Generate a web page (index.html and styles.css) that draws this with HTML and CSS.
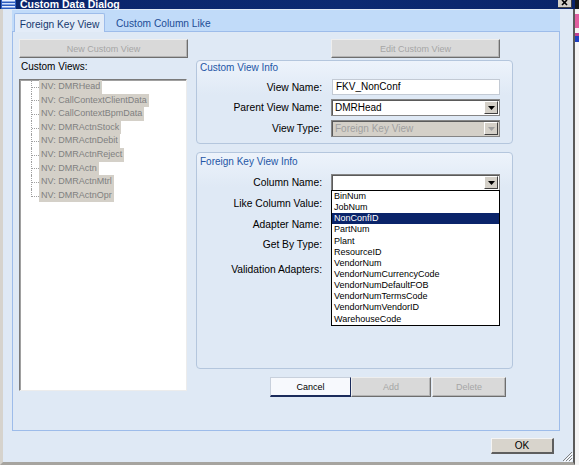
FILE: index.html
```html
<!DOCTYPE html>
<html>
<head>
<meta charset="utf-8">
<link rel="stylesheet" href="styles.css">
</head>
<body>
<div class="screen">
  <div class="window">
    <div class="titlebar">
      <svg class="app-icon" width="17" height="9" viewBox="0 0 17 9">
        <rect x="1" y="-2" width="15" height="11" fill="#2c5cc0"/>
        <rect x="2" y="0" width="13" height="1.5" fill="#e8f0ff"/>
        <rect x="2" y="3" width="13" height="1.5" fill="#cfe0ff"/>
        <rect x="2" y="6" width="13" height="1.5" fill="#e8f0ff"/>
      </svg>
      <span class="title">Custom Data Dialog</span>
      <span class="close">
        <svg width="13" height="7" viewBox="0 0 13 7"><path d="M4 0 L9 5 M9 0 L4 5" stroke="#000" stroke-width="1.6"/></svg>
      </span>
    </div>
    <div class="client">
      <div class="tabstrip">
        <div class="tab active">Foreign Key View</div>
        <div class="tab">Custom Column Like</div>
      </div>
      <div class="panel">
        <div class="col-left">
          <button class="btn btn-off btn-wide">New Custom View</button>
          <div class="lbl-views">Custom Views:</div>
          <div class="tree">
            <ul class="tree-list">
              <li><span class="item">NV: DMRHead</span></li>
              <li><span class="item">NV: CallContextClientData</span></li>
              <li><span class="item">NV: CallContextBpmData</span></li>
              <li><span class="item">NV: DMRActnStock</span></li>
              <li><span class="item">NV: DMRActnDebit</span></li>
              <li><span class="item">NV: DMRActnReject</span></li>
              <li><span class="item">NV: DMRActn</span></li>
              <li><span class="item">NV: DMRActnMtrl</span></li>
              <li><span class="item">NV: DMRActnOpr</span></li>
            </ul>
          </div>
        </div>
        <div class="col-right">
          <div class="top-row">
            <button class="btn btn-off btn-wide btn-edit">Edit Custom View</button>
          </div>
          <div class="group group-info">
            <div class="group-title">Custom View Info</div>
            <div class="form-row r16">
              <div class="label">View Name:</div>
              <div class="input">FKV_NonConf</div>
            </div>
            <div class="form-row r17">
              <div class="label">Parent View Name:</div>
              <div class="combo">
                <span class="val">DMRHead</span>
                <span class="arrow"><svg width="7" height="4" viewBox="0 0 7 4"><path d="M0 0 H7 L3.5 4 Z" fill="#000"/></svg></span>
              </div>
            </div>
            <div class="form-row r17">
              <div class="label">View Type:</div>
              <div class="combo combo-off">
                <span class="val">Foreign Key View</span>
                <span class="arrow"><svg width="7" height="4" viewBox="0 0 7 4"><path d="M0 0 H7 L3.5 4 Z" fill="#a0a0a0"/></svg></span>
              </div>
            </div>
          </div>
          <div class="group group-fk">
            <div class="group-title">Foreign Key View Info</div>
            <div class="fk-rows">
              <div class="form-row r17">
                <div class="label">Column Name:</div>
                <div class="combo-wrap">
                  <div class="combo">
                    <span class="val"></span>
                    <span class="arrow"><svg width="7" height="4" viewBox="0 0 7 4"><path d="M0 0 H7 L3.5 4 Z" fill="#000"/></svg></span>
                  </div>
                  <div class="dropdown">
                    <div class="opt">BinNum</div>
                    <div class="opt">JobNum</div>
                    <div class="opt sel">NonConfID</div>
                    <div class="opt">PartNum</div>
                    <div class="opt">Plant</div>
                    <div class="opt">ResourceID</div>
                    <div class="opt">VendorNum</div>
                    <div class="opt">VendorNumCurrencyCode</div>
                    <div class="opt">VendorNumDefaultFOB</div>
                    <div class="opt">VendorNumTermsCode</div>
                    <div class="opt">VendorNumVendorID</div>
                    <div class="opt">WarehouseCode</div>
                  </div>
                </div>
              </div>
              <div class="form-row r17"><div class="label">Like Column Value:</div></div>
              <div class="form-row r17 plus1"><div class="label">Adapter Name:</div></div>
              <div class="form-row r17"><div class="label">Get By Type:</div></div>
              <div class="form-row r17 plus4"><div class="label">Validation Adapters:</div></div>
            </div>
          </div>
          <div class="action-row">
            <button class="btn btn-cancel">Cancel</button>
            <button class="btn btn-off btn-add">Add</button>
            <button class="btn btn-off btn-delete">Delete</button>
          </div>
        </div>
      </div>
      <div class="footer">
        <button class="btn btn-ok">OK</button>
      </div>
      <svg class="grip" width="11" height="11" viewBox="0 0 11 11">
        <path d="M10 1 L1 10 M10 4 L4 10 M10 7 L7 10" stroke="#808080" stroke-width="1"/>
        <path d="M11 2 L2 11 M11 5 L5 11 M11 8 L8 11" stroke="#ffffff" stroke-width="1"/>
      </svg>
    </div>
  </div>
  <div class="outside"></div>
</div>
</body>
</html>
```
FILE: styles.css
```css
html, body {
  margin: 0;
  padding: 0;
}
body {
  width: 579px;
  height: 465px;
  overflow: hidden;
  background: #f2f2f2;
  font-family: "Liberation Sans", Arial, sans-serif;
}
.screen {
  display: flex;
  width: 579px;
  height: 465px;
}
.window {
  width: 575px;
  height: 465px;
  display: flex;
  flex-direction: column;
  flex: none;
}
.titlebar {
  height: 9px;
  flex: none;
  display: flex;
  align-items: flex-start;
  background: linear-gradient(90deg, #0a246a, #0c2a72 60%, #0a246a);
  overflow: hidden;
}
.app-icon {
  flex: none;
  display: block;
}
.title {
  margin-left: 3px;
  margin-top: -2px;
  color: #ffffff;
  font-weight: bold;
  font-size: 10.5px;
  line-height: 12px;
  white-space: nowrap;
}
.close {
  margin-left: auto;
  margin-right: 3px;
  width: 13px;
  height: 7px;
  background: #d4d0c8;
  border-right: 1px solid #404040;
  border-bottom: 1px solid #404040;
  display: flex;
}
.client {
  flex: 1;
  position: relative;
  display: flex;
  flex-direction: column;
  background: #dfe9f5;
  border-left: 3px solid #d6d3cd;
  border-right: 2px solid #5a5a5a;
  border-bottom: 3px solid #a6a49f;
  padding: 1px 13px 0 9px;
}
.tabstrip {
  height: 21px;
  flex: none;
  display: flex;
  align-items: flex-end;
  background: #c1dbf9;
}
.tab {
  height: 18px;
  box-sizing: border-box;
  display: flex;
  align-items: center;
  padding-top: 2px;
  padding-left: 11px;
  font-size: 10.2px;
  color: #1d4d96;
  white-space: nowrap;
}
.tab.active {
  margin-left: 2px;
  width: 91px;
  height: 19px;
  padding-left: 0;
  justify-content: center;
  background: #e3ecf8;
  border: 1px solid #9dbcea;
  border-bottom: none;
  border-radius: 2px 2px 0 0;
  margin-bottom: -1px;
  position: relative;
  z-index: 1;
  color: #15386e;
}
.panel {
  height: 400px;
  flex: none;
  box-sizing: border-box;
  border: 1px solid #9dbcea;
  background: #dfe9f5;
  display: flex;
  gap: 8px;
  padding: 7px 0 0 6px;
}
.col-left {
  width: 169px;
  display: flex;
  flex-direction: column;
}
.col-right {
  width: 317px;
  display: flex;
  flex-direction: column;
}
.btn {
  font-family: "Liberation Sans", Arial, sans-serif;
  font-size: 9px;
  box-sizing: border-box;
  margin: 0;
  padding: 0;
  display: flex;
  align-items: center;
  justify-content: center;
}
.btn-off {
  background: #d9d9d9;
  color: #a6a6a6;
  border: 1px solid;
  border-color: #eeeeee #6e6e6e #6e6e6e #eeeeee;
  box-shadow: inset -1px -1px 0 #b4b4b4;
}
.btn-wide {
  width: 169px;
  height: 19px;
}
.top-row {
  display: flex;
  height: 19px;
}
.btn-edit {
  margin-left: 135px;
}
.lbl-views {
  height: 21px;
  line-height: 18px;
  padding-left: 2px;
  font-size: 10px;
  color: #000;
}
.tree {
  width: 168px;
  height: 312px;
  box-sizing: border-box;
  background: #ffffff;
  border: 1px solid;
  border-color: #7a7a7a #ececec #ececec #7a7a7a;
  box-shadow: inset 1px 1px 0 #a0a0a0;
}
.tree-list {
  list-style: none;
  margin: 0 0 0 11px;
  padding: 0;
}
.tree-list li {
  display: flex;
  height: 13.6px;
  line-height: 13.6px;
  border-left: 1px dotted #a0a0a0;
  font-size: 9px;
  white-space: nowrap;
}
.tree-list li::before {
  content: "";
  flex: none;
  width: 7px;
  height: 6.8px;
  border-bottom: 1px dotted #a0a0a0;
}
.tree-list li:last-child {
  border-left: none;
}
.tree-list li:last-child::before {
  border-left: 1px dotted #a0a0a0;
}
.item {
  background: #d4d0c8;
  color: #808080;
  padding: 0 2px;
}
.group {
  box-sizing: border-box;
  border: 1px solid #b4c6dd;
  border-radius: 4px;
  background: linear-gradient(#edf3fb, #dfe9f5 34px);
}
.group-info {
  margin-top: 2px;
  padding-bottom: 6px;
}
.group-fk {
  margin-top: 8px;
  height: 217px;
}
.group-title {
  height: 14px;
  line-height: 14px;
  padding-left: 3px;
  font-size: 10px;
  color: #2456a6;
}
.group-fk .group-title {
  margin-top: 2px;
}
.form-row {
  display: flex;
  align-items: center;
  margin-top: 4px;
}
.group-info .form-row:first-of-type {
  margin-top: 5px;
}
.r16 { height: 16px; }
.r17 { height: 17px; }
.fk-rows {
  display: flex;
  flex-direction: column;
  margin-top: 5px;
}
.fk-rows .form-row {
  margin-top: 3.5px;
}
.fk-rows .form-row:first-child {
  margin-top: 0;
}
.fk-rows .form-row.plus1 { margin-top: 4px; }
.fk-rows .form-row.plus4 { margin-top: 7.5px; }
.label {
  width: 125px;
  flex: none;
  text-align: right;
  font-size: 10.3px;
  color: #000;
  white-space: nowrap;
}
.input {
  margin-left: 10px;
  width: 168px;
  height: 16px;
  box-sizing: border-box;
  border: 1px solid #c3cad4;
  background: #ffffff;
  font-size: 10px;
  line-height: 14px;
  padding-left: 3px;
  color: #000;
}
.combo {
  margin-left: 9px;
  width: 169px;
  height: 17px;
  box-sizing: border-box;
  display: flex;
  background: #ffffff;
  border: 1px solid #858585;
  box-shadow: inset 1px 1px 0 #5a5a5a;
}
.combo .val {
  flex: 1;
  font-size: 10px;
  line-height: 15px;
  padding-left: 3px;
  color: #000;
  white-space: nowrap;
  overflow: hidden;
}
.combo .arrow {
  flex: none;
  width: 14px;
  margin: 1px 1px 1px 0;
  box-sizing: border-box;
  background: #d4d0c8;
  border: 1px solid;
  border-color: #ffffff #404040 #404040 #ffffff;
  display: flex;
  align-items: center;
  justify-content: center;
}
.combo-off {
  background: #d4d0c8;
}
.combo-off .val {
  color: #a0a0a0;
}
.combo-wrap {
  position: relative;
  display: flex;
}
.dropdown {
  position: absolute;
  top: 16px;
  left: 9px;
  width: 169px;
  box-sizing: border-box;
  border: 1px solid #000;
  background: #ffffff;
  z-index: 5;
}
.opt {
  height: 11.15px;
  line-height: 11.15px;
  font-size: 9px;
  padding-left: 2px;
  color: #000;
  white-space: nowrap;
}
.opt.sel {
  background: #0a246a;
  color: #ffffff;
}
.action-row {
  display: flex;
  justify-content: flex-end;
  padding-right: 7px;
  margin-top: 8px;
}
.btn-cancel {
  width: 81px;
  height: 20px;
  background: #f7f9fd;
  color: #000;
  border-style: solid;
  border-width: 1px 1px 2px 1px;
  border-color: #c8d0dc #1b2b5b #1b2b5b #c8d0dc;
}
.btn-add {
  width: 80px;
  height: 20px;
}
.btn-delete {
  width: 74px;
  height: 20px;
  margin-left: 1px;
}
.footer {
  display: flex;
  justify-content: flex-end;
  margin-top: 7px;
  padding-right: 6px;
}
.btn-ok {
  width: 63px;
  height: 16px;
  background: #d8d4cc;
  color: #000;
  font-size: 10px;
  border-style: solid;
  border-width: 1px 2px 2px 1px;
  border-color: #f4f4f4 #5e5e5e #5e5e5e #f4f4f4;
}
.grip {
  position: absolute;
  right: 0;
  bottom: 0;
}
.outside {
  width: 4px;
  height: 465px;
  flex: none;
  background: linear-gradient(#1a1a1a 0 9px, #f4f4f4 9px 14px, #e060a0 14px 28px, #f4f4f4 28px 33px, #c04090 33px 36px, #2040c0 36px 42px, #f4f4f4 42px);
}
```
